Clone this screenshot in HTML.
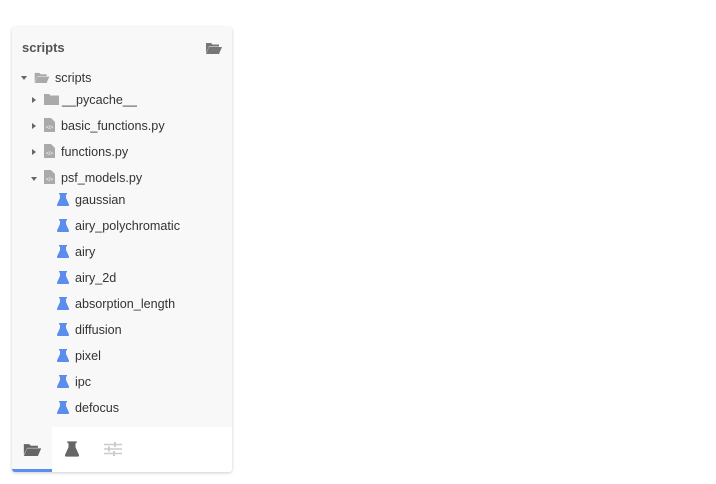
<!DOCTYPE html><html><head><style>
body{margin:0;width:716px;height:484px;background:#fff;font-family:"Liberation Sans",sans-serif;position:relative;overflow:hidden}
.p{position:absolute;left:12px;top:27px;width:220px;height:445px;background:#f8f8f8;box-shadow:0 1px 3px rgba(0,0,0,.2);border-radius:3px;overflow:hidden}
.t{position:absolute;font-size:12.6px;color:#333;white-space:nowrap}
.h{font-weight:bold;font-size:13px;color:#555}
svg{position:absolute}
.tab{position:absolute;top:400px;left:0;width:220px;height:45px;background:#fff}
</style></head><body>
<div class="p">
<div class="t h" style="left:10px;top:13px">scripts</div>
<svg style="left:194px;top:15px" width="16" height="12" viewBox="0 0 16 12"><path d="M0 1h5l1.5 1.5H13v2H3L0 11z" fill="#777"/><path d="M3 5h13l-3 7H0z" fill="#777"/></svg>
<svg style="left:9px;top:49px" width="6" height="4"><path d="M0 0h6L3 4z" fill="#666"/></svg>
<svg style="left:22px;top:45px" width="16" height="11" viewBox="0 0 16 12"><path d="M0 1h5l1.5 1.5H13v2H3L0 11z" fill="#aaa"/><path d="M3 5h13l-3 7H0z" fill="#aaa"/></svg>
<div class="t" style="left:43px;top:44px">scripts</div>
<svg style="left:20px;top:70px" width="4" height="6"><path d="M0 0l4 3-4 3z" fill="#666"/></svg>
<svg style="left:32px;top:67px" width="15" height="11"><path d="M0 0h5l1.5 1.5H15V11H0z" fill="#aaa"/></svg>
<div class="t" style="left:50px;top:66px">__pycache__</div>
<svg style="left:20px;top:96px" width="4" height="6"><path d="M0 0l4 3-4 3z" fill="#666"/></svg>
<svg style="left:32px;top:91px" width="11" height="14"><path d="M0 0h7l4 4v10H0z" fill="#aaa"/><text x="2" y="11" font-size="5" fill="#fff">&lt;/&gt;</text></svg>
<div class="t" style="left:49px;top:92px">basic_functions.py</div>
<svg style="left:20px;top:122px" width="4" height="6"><path d="M0 0l4 3-4 3z" fill="#666"/></svg>
<svg style="left:32px;top:117px" width="11" height="14"><path d="M0 0h7l4 4v10H0z" fill="#aaa"/><text x="2" y="11" font-size="5" fill="#fff">&lt;/&gt;</text></svg>
<div class="t" style="left:49px;top:118px">functions.py</div>
<svg style="left:19px;top:150px" width="6" height="4"><path d="M0 0h6L3 4z" fill="#666"/></svg>
<svg style="left:32px;top:143px" width="11" height="14"><path d="M0 0h7l4 4v10H0z" fill="#aaa"/><text x="2" y="11" font-size="5" fill="#fff">&lt;/&gt;</text></svg>
<div class="t" style="left:49px;top:144px">psf_models.py</div>
</div>
<div style="position:absolute;left:12px;top:27px;width:220px;height:445px;overflow:hidden;border-radius:3px">
<svg style="left:45px;top:166px" width="12" height="13" viewBox="0 0 12 13"><path d="M2 0h8v1.5H9v3.5l3 6.5q.3 1.5-1 1.5H1q-1.3 0-1-1.5L3 5V1.5H2z" fill="#5b8def"/></svg><div class="t" style="left:63px;top:166px">gaussian</div>
<svg style="left:45px;top:192px" width="12" height="13" viewBox="0 0 12 13"><path d="M2 0h8v1.5H9v3.5l3 6.5q.3 1.5-1 1.5H1q-1.3 0-1-1.5L3 5V1.5H2z" fill="#5b8def"/></svg><div class="t" style="left:63px;top:192px">airy_polychromatic</div>
<svg style="left:45px;top:218px" width="12" height="13" viewBox="0 0 12 13"><path d="M2 0h8v1.5H9v3.5l3 6.5q.3 1.5-1 1.5H1q-1.3 0-1-1.5L3 5V1.5H2z" fill="#5b8def"/></svg><div class="t" style="left:63px;top:218px">airy</div>
<svg style="left:45px;top:244px" width="12" height="13" viewBox="0 0 12 13"><path d="M2 0h8v1.5H9v3.5l3 6.5q.3 1.5-1 1.5H1q-1.3 0-1-1.5L3 5V1.5H2z" fill="#5b8def"/></svg><div class="t" style="left:63px;top:244px">airy_2d</div>
<svg style="left:45px;top:270px" width="12" height="13" viewBox="0 0 12 13"><path d="M2 0h8v1.5H9v3.5l3 6.5q.3 1.5-1 1.5H1q-1.3 0-1-1.5L3 5V1.5H2z" fill="#5b8def"/></svg><div class="t" style="left:63px;top:270px">absorption_length</div>
<svg style="left:45px;top:296px" width="12" height="13" viewBox="0 0 12 13"><path d="M2 0h8v1.5H9v3.5l3 6.5q.3 1.5-1 1.5H1q-1.3 0-1-1.5L3 5V1.5H2z" fill="#5b8def"/></svg><div class="t" style="left:63px;top:296px">diffusion</div>
<svg style="left:45px;top:322px" width="12" height="13" viewBox="0 0 12 13"><path d="M2 0h8v1.5H9v3.5l3 6.5q.3 1.5-1 1.5H1q-1.3 0-1-1.5L3 5V1.5H2z" fill="#5b8def"/></svg><div class="t" style="left:63px;top:322px">pixel</div>
<svg style="left:45px;top:348px" width="12" height="13" viewBox="0 0 12 13"><path d="M2 0h8v1.5H9v3.5l3 6.5q.3 1.5-1 1.5H1q-1.3 0-1-1.5L3 5V1.5H2z" fill="#5b8def"/></svg><div class="t" style="left:63px;top:348px">ipc</div>
<svg style="left:45px;top:374px" width="12" height="13" viewBox="0 0 12 13"><path d="M2 0h8v1.5H9v3.5l3 6.5q.3 1.5-1 1.5H1q-1.3 0-1-1.5L3 5V1.5H2z" fill="#5b8def"/></svg><div class="t" style="left:63px;top:374px">defocus</div>
<svg style="left:45px;top:400px" width="12" height="13" viewBox="0 0 12 13"><path d="M2 0h8v1.5H9v3.5l3 6.5q.3 1.5-1 1.5H1q-1.3 0-1-1.5L3 5V1.5H2z" fill="#c8d6f5"/></svg>
<div class="tab">
<div style="position:absolute;left:0;top:0;width:40px;height:45px;background:#f8f8f8"></div>
<div style="position:absolute;left:0;top:42px;width:40px;height:3px;background:#5b8def"></div>
<svg style="left:11px;top:16px" width="19" height="13" viewBox="0 0 16 12"><path d="M0 1h5l1.5 1.5H13v2H3L0 11z" fill="#666"/><path d="M3 5h13l-3 7H0z" fill="#666"/></svg>
<svg style="left:53px;top:14px" width="14" height="16" viewBox="0 0 12 13"><path d="M2 0h8v1.5H9v3.5l3 6.5q.3 1.5-1 1.5H1q-1.3 0-1-1.5L3 5V1.5H2z" fill="#666"/></svg>
<svg style="left:92px;top:15px" width="18" height="14"><g stroke="#ccc" stroke-width="1.5"><path d="M0 2.5h18M0 7h18M0 11.5h18"/></g><g fill="#ccc"><rect x="10" y="0" width="2" height="5"/><rect x="4" y="4.5" width="2" height="5"/><rect x="9" y="9" width="2" height="5"/></g></svg>
</div>
</div>
</body></html>
